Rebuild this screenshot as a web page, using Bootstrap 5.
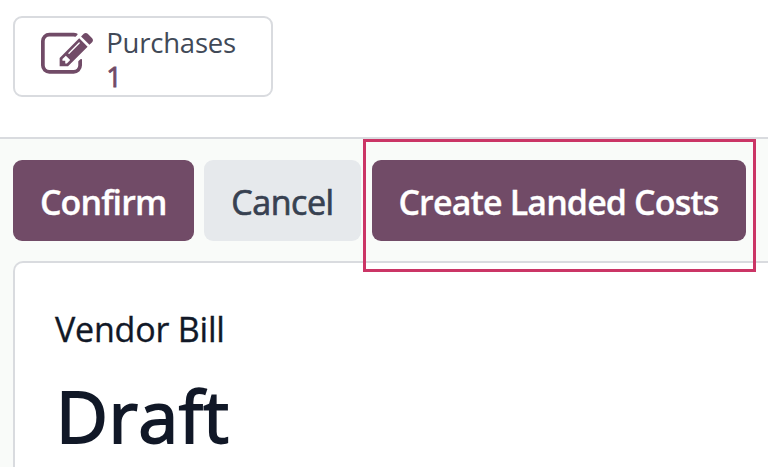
<!DOCTYPE html>
<html lang="en">
<head>
<meta charset="utf-8">
<meta name="viewport" content="width=device-width, initial-scale=1">
<title>Vendor Bill</title>
<link href="https://cdn.jsdelivr.net/npm/bootstrap@5.3.0/dist/css/bootstrap.min.css" rel="stylesheet">
<script src="https://cdn.jsdelivr.net/npm/bootstrap@5.3.0/dist/js/bootstrap.bundle.min.js" defer></script>
<style>
  :root { --brand: #714b67; --line: #d9dbdf; }
  body { font-family: "Segoe UI", "Open Sans", "Noto Sans", sans-serif; color: #111827; height: 467px; white-space: nowrap; }
  .top-area { height: 139px; padding: 16px 0 0 13px; border-bottom: 2px solid var(--line); }
  .stat-btn { width: 260px; height: 81px; border: 2px solid var(--line); border-radius: 9px; padding: 0 0 0 26px; }
  .stat-btn svg { width: 52.2px; height: 52.2px; margin-top: -3px; fill: var(--brand); }
  .stat-text { margin-left: 13px; padding-top: 6px; font-size: 27.5px; line-height: 33.5px; letter-spacing: -.2px; color: #414957; }
  .stat-value { color: var(--brand); -webkit-text-stroke: .8px var(--brand); }
  .form-area { background: #f9fbf9; padding: 21px 0 0 13px; }
  .actions { gap: 10.5px; }
  .action { height: 81px; padding: 3px 0 0; border: 0; border-radius: 9px; font-size: 34px; line-height: 1; font-weight: 600; letter-spacing: -.88px; }
  .action-main, .action-main:hover { background: var(--brand); color: #fff; -webkit-text-stroke: .3px #fff; }
  .action-alt, .action-alt:hover { background: #e6e9ec; color: #374151; font-weight: 400; letter-spacing: -.45px; -webkit-text-stroke: .7px #374151; }
  .w-confirm { width: 180.5px; }
  .w-cancel { width: 157px; }
  .w-landed { width: 374px; }
  .marker { left: -8.5px; top: -21.5px; width: 392.5px; height: 133px; border: 3px solid #cb3566; }
  .sheet { height: 206px; margin-top: 20px; border: 2px solid var(--line); border-right: 0; border-bottom: 0; border-top-left-radius: 10px; padding: 42px 0 0 40px; }
  .kind { font-size: 34px; line-height: 48px; letter-spacing: -.2px; -webkit-text-stroke: .35px #111827; }
  .state { font-size: 72px; line-height: 98px; font-weight: 400; margin: 13px 0 0 .8px; letter-spacing: .4px; -webkit-text-stroke: 1.8px #111827; }
</style>
</head>
<body class="bg-white overflow-hidden d-flex flex-column">
<header class="top-area flex-shrink-0">
  <button class="btn stat-btn bg-white d-flex align-items-center text-start" type="button">
    <svg viewBox="0 0 1792 1792" aria-hidden="true"><path d="M888 1184l116-116-152-152-116 116v56h96v96h56zm440-720q-16-16-33 1l-350 350q-17 17-1 33t33-1l350-350q17-17 1-33zm80 594v190q0 119-84.5 203.5t-203.5 84.5h-832q-119 0-203.5-84.5t-84.5-203.5v-832q0-119 84.5-203.5t203.5-84.5h832q63 0 117 25 15 7 18 23 3 17-9 29l-49 49q-14 14-32 8-23-6-45-6h-832q-66 0-113 47t-47 113v832q0 66 47 113t113 47h832q66 0 113-47t47-113v-126q0-13 9-22l64-64q15-15 35-7t20 29zm-96-738l288 288-672 672h-288v-288zm444 132l-92 92-288-288 92-92q28-28 68-28t68 28l152 152q28 28 28 68t-28 68z"/></svg>
    <span class="stat-text d-flex flex-column"><span class="stat-label">Purchases</span><span class="stat-value">1</span></span>
  </button>
</header>
<main class="form-area flex-grow-1">
  <div class="actions d-flex">
    <button class="btn action action-main w-confirm" type="button">Confirm</button>
    <button class="btn action action-alt w-cancel" type="button">Cancel</button>
    <div class="position-relative">
      <button class="btn action action-main w-landed" type="button">Create Landed Costs</button>
      <div class="marker position-absolute pe-none"></div>
    </div>
  </div>
  <section class="sheet bg-white">
    <div class="kind">Vendor Bill</div>
    <h1 class="state">Draft</h1>
  </section>
</main>
</body>
</html>
